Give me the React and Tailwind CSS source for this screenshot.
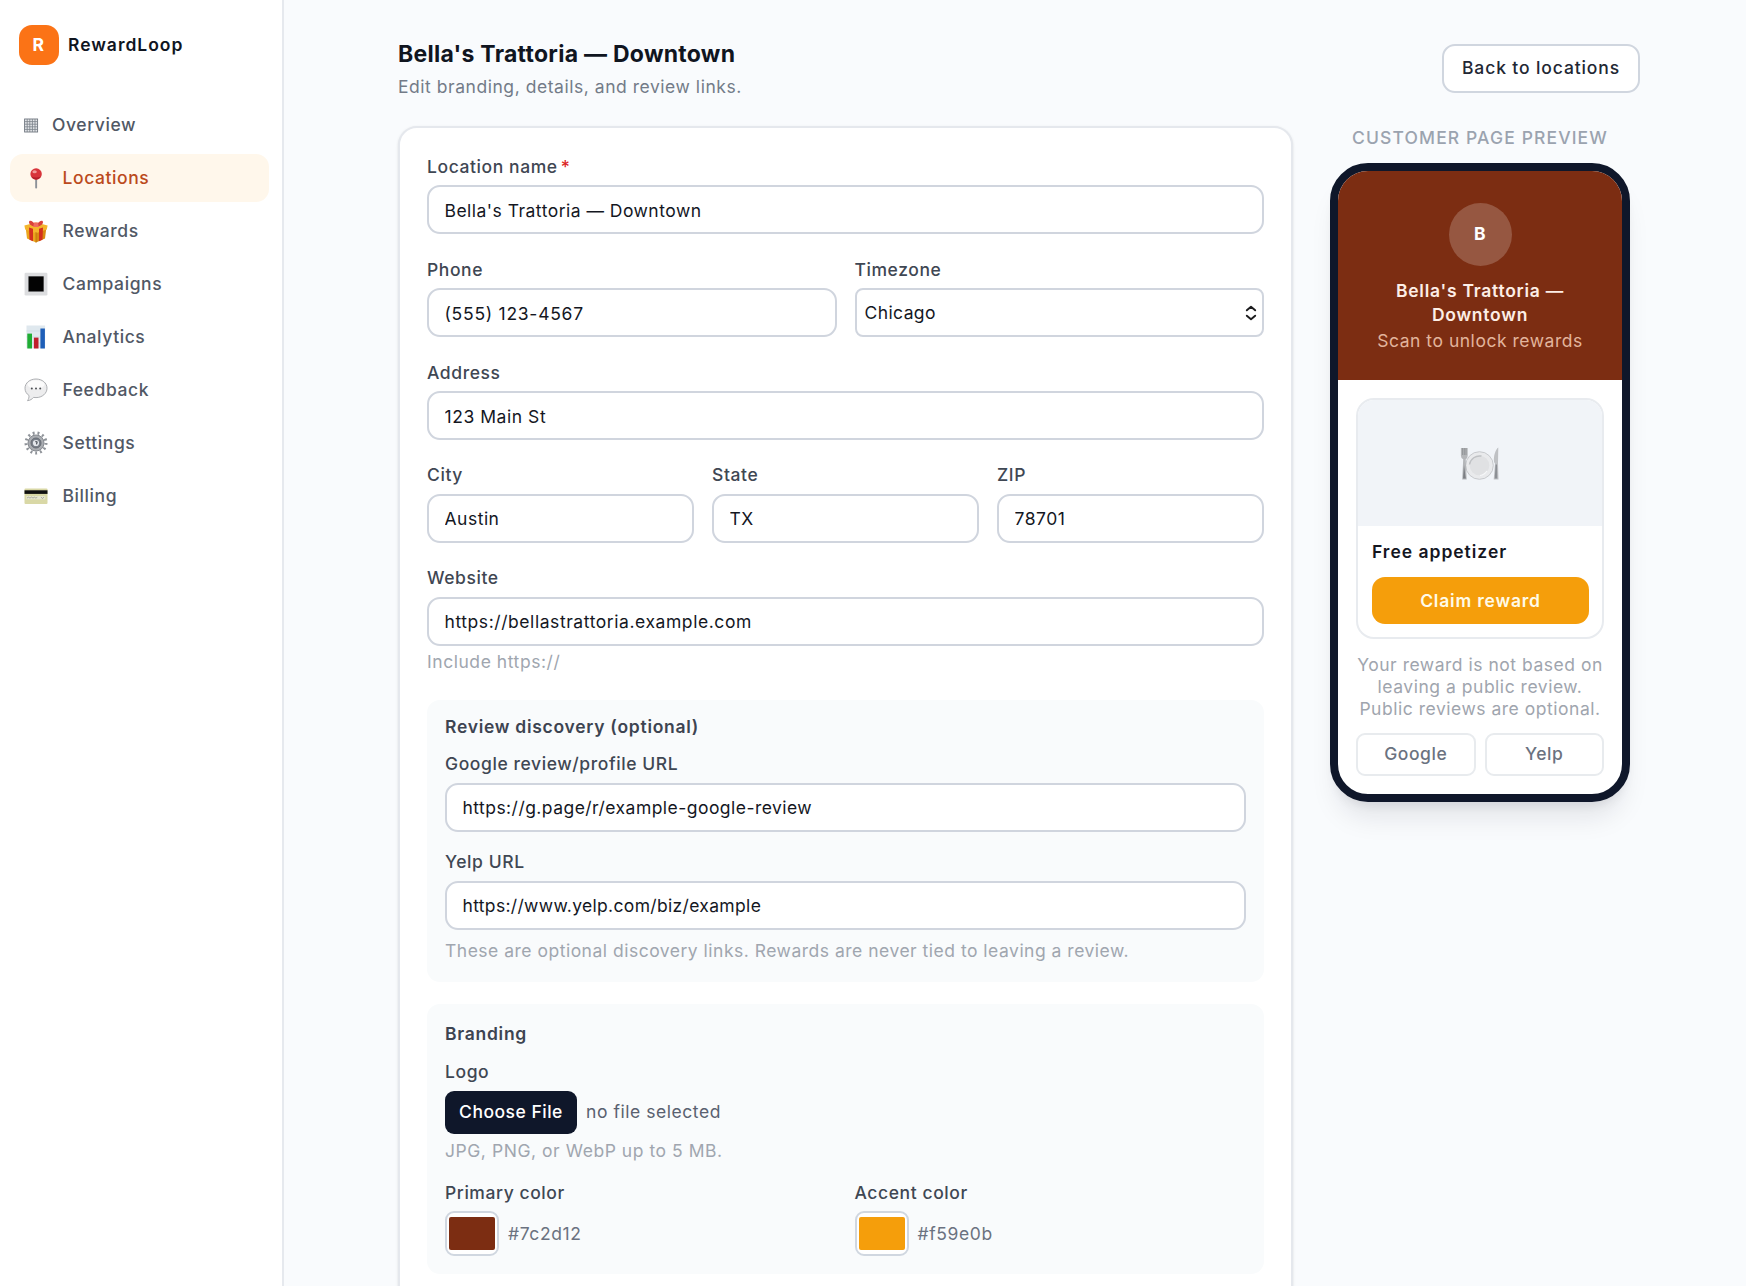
import React, { useState } from 'react'

// --- ICONS ---
const GridIcon = () => (
  <svg width="15" height="15" viewBox="0 0 15 15" className="-mr-0.5 ml-[0.5px] shrink-0">
    <rect x="0.6" y="1" width="13" height="13" fill="#e5e7ea" stroke="#6f767f" strokeWidth="0.9" />
    <path d="M3.2 1v13M5.8 1v13M8.4 1v13M11 1v13M.6 3.6h13M.6 6.2h13M.6 8.8h13M.6 11.4h13" stroke="#7d848d" strokeWidth="0.85" />
  </svg>
)

const PinIcon = () => (
  <svg width="24" height="24" viewBox="0 0 24 24" className="shrink-0">
    <rect x="11.2" y="10" width="1.9" height="12.6" rx="0.8" fill="#8d9299" />
    <circle cx="12.1" cy="8" r="5.7" fill="#d8343a" />
    <path d="M7.2 10.6a5.7 5.7 0 0 0 9.8 0q-4.8 2-9.8 0" fill="#b31f2a" />
    <ellipse cx="10.6" cy="5.7" rx="2.2" ry="1.5" fill="#f19a98" />
  </svg>
)

const GiftIcon = () => (
  <svg width="24" height="24" viewBox="0 0 24 24" className="shrink-0">
    <path d="M1.600 8.500L12 12.500v11L3 19.500z" fill="#eba51d" />
    <path d="M22.400 8.500L12 12.500v11l9-4z" fill="#d98b12" />
    <path d="M.4 6.500L12 3.500l11.600 3-.8 4L12 14.200 1.200 10.500z" fill="#f4b52c" />
    <path d="M5 8.500l4 1.300v12.500l-3.500-1.600zM19 8.500l-4 1.300v12.500l3.500-1.600z" fill="#d3301f" />
    <path d="M12 6.500C9 1.500 5 .3 5 3.200c0 2.400 3.500 4.300 7 4.600 3.500-.3 7-2.200 7-4.600 0-2.900-4-1.700-7 3.300z" fill="#d9423b" />
    <path d="M10 3.500h4l.8 4.500H9.200z" fill="#ef6a61" />
    <path d="M12 13v10.500" stroke="#b96f10" strokeWidth="0.8" />
  </svg>
)

const SquareIcon = () => (
  <svg width="24" height="24" viewBox="0 0 24 24" className="shrink-0">
    <rect x="0.6" y="0.8" width="22.8" height="22.6" rx="1.2" fill="#dcdddf" />
    <rect x="4" y="4" width="16" height="16" rx="0.8" fill="#9b9c9f" />
    <rect x="4.7" y="4.5" width="14.8" height="14.8" fill="#030303" />
  </svg>
)

const ChartIcon = () => (
  <svg width="24" height="24" viewBox="0 0 24 24" className="shrink-0">
    <rect x="2.5" y="0.5" width="18.6" height="22.8" fill="#dfe8ee" />
    <path d="M2.5 6h18.6M2.5 12h18.6M2.5 18h18.6" stroke="#cbd7df" strokeWidth="0.6" />
    <rect x="3.3" y="8.6" width="4.7" height="14.9" fill="#20ad34" />
    <rect x="9.9" y="12.6" width="4.6" height="10.9" fill="#c01f2c" />
    <rect x="16.4" y="3.5" width="4.5" height="20" fill="#1f5fb8" />
  </svg>
)

const BubbleIcon = () => (
  <svg width="24" height="24" viewBox="0 0 24 24" className="shrink-0">
    <path d="M12 1C5.800 1 1 5 1 10.200c0 3.200 1.600 5.700 4 7.300.2 2-.5 3.700-1.500 5.200 2.700-.3 4.700-1.600 6-3.300.8.100 1.600.2 2.500.2 6.200 0 11-4.200 11-9.400S18.200 1 12 1z" fill="#ededee" stroke="#a5a7aa" strokeWidth="0.9" />
    <ellipse cx="12" cy="6.5" rx="8.5" ry="4.2" fill="#fbfbfb" />
    <circle cx="7.8" cy="10.5" r="1" fill="#4c4f54" />
    <circle cx="12" cy="10.5" r="1" fill="#4c4f54" />
    <circle cx="16.2" cy="10.5" r="1" fill="#4c4f54" />
  </svg>
)

const GearIcon = () => (
  <svg width="24" height="24" viewBox="0 0 24 24" className="shrink-0">
    <circle cx="12" cy="12" r="10" fill="none" stroke="#8f9399" strokeWidth="3" strokeDasharray="1.9 2.933" />
    <circle cx="12" cy="12" r="8" fill="#aaadb2" stroke="#868a90" strokeWidth="1" />
    <circle cx="12" cy="12" r="5" fill="#7a808a" stroke="#62676f" strokeWidth="0.9" />
    <circle cx="12" cy="12" r="3.1" fill="#e4e7ec" />
    <path d="M11.4 10.4l1.7.7-.6 2.2" stroke="#4b5059" strokeWidth="1.2" fill="none" />
  </svg>
)

const CardIcon = () => (
  <svg width="24" height="24" viewBox="0 0 24 24" className="shrink-0">
    <rect x="0.5" y="4.5" width="23" height="15.5" rx="1" fill="#d9d8a6" />
    <rect x="0.5" y="6.3" width="23" height="3.6" fill="#101010" />
    <rect x="2.3" y="12" width="19" height="3.4" fill="#e6e6cf" />
    <path d="M3 14l1.500-.8 1.500.9 1.400-1 1.600.9 1.500-.8 1.400.9 1.400-.9M17 12.900l1.500 1.700 1.500-1.700" stroke="#93948a" strokeWidth="0.7" fill="none" />
  </svg>
)

const PlateIcon = () => (
  <svg width="42" height="36" viewBox="0 0 42 36" className="mt-0.5">
    <circle cx="20.5" cy="19.5" r="13.8" fill="#e9eaec" stroke="#c3c5c8" strokeWidth="0.9" />
    <circle cx="20.5" cy="19.5" r="9.8" fill="#e0e1e3" />
    <path d="M10.5 18.5a10.2 10.2 0 0 1 12-8.400" stroke="#bfc1c4" strokeWidth="1.5" fill="none" />
    <path d="M28 25a10 10 0 0 1-7 4.500" stroke="#f7f8f9" strokeWidth="1.2" fill="none" />
    <path d="M1.900 2v7.500q0 3 2.300 3.700l-1 20.300h4.500l-1-20.300Q8.700 12.500 8.700 9.500V2" fill="#b4b6b9" />
    <path d="M3.600 2v7M5.300 2v7M7 2v7" stroke="#84878b" strokeWidth="0.7" />
    <path d="M5 19l-1 13.500h2.800z" fill="#7c7f84" />
    <path d="M39.300 1.500c-2.700 1.700-5 8.500-4.300 14.500l1 1.700-1.300 15.800h4.800L39 17z" fill="#bfc1c4" />
    <path d="M36.600 18.500l-.9 14h2.600l-.3-14z" fill="#8c8f94" />
  </svg>
)

const UpDownIcon = () => (
  <svg width="12" height="16" viewBox="0 0 12 16" fill="none" stroke="#1c1c1e" strokeWidth="1.9" strokeLinecap="round" strokeLinejoin="round">
    <path d="M1.800 5.300L6 1.700l4.200 3.600M1.800 10.700L6 14.300l4.200-3.600" />
  </svg>
)

const navItems = [
  { id: 'overview', label: 'Overview', icon: GridIcon },
  { id: 'locations', label: 'Locations', icon: PinIcon },
  { id: 'rewards', label: 'Rewards', icon: GiftIcon },
  { id: 'campaigns', label: 'Campaigns', icon: SquareIcon },
  { id: 'analytics', label: 'Analytics', icon: ChartIcon },
  { id: 'feedback', label: 'Feedback', icon: BubbleIcon },
  { id: 'settings', label: 'Settings', icon: GearIcon },
  { id: 'billing', label: 'Billing', icon: CardIcon },
]

// --- FORM PIECES ---
const Label = ({ children, required }) => (
  <span className="block h-[26px] leading-[26px] font-medium tracking-[0.580px] text-[#3f4753]">
    {children}
    {required && <span className="ml-[3px] text-[#dc2626]">*</span>}
  </span>
)

const Field = ({ label, value, required, className = '', tracking = 'tracking-[0.550px]' }) => (
  <label className={`block ${className}`}>
    <Label required={required}>{label}</Label>
    <input
      defaultValue={value}
      className={`mt-[5.500px] block h-[49px] w-full rounded-[13px] border-2 border-[#d0d5de] bg-white px-[15.500px] pt-px text-[#14171f] outline-none ${tracking}`}
    />
  </label>
)

const ColorField = ({ label, value }) => (
  <div>
    <Label>{label}</Label>
    <div className="mt-[5px] flex items-center gap-[9px]">
      <div className="h-[45px] w-[54px] rounded-[9px] border-2 border-[#d0d7e0] bg-white px-0.5 py-1">
        <div className="h-[33px] rounded-[2px]" style={{ backgroundColor: value }}></div>
      </div>
      <span className="pt-0.5 tracking-[0.600px] text-[#6b7280]">{value}</span>
    </div>
  </div>
)

function Sidebar({ active, onSelect }) {
  return (
    <aside className="w-[284px] shrink-0 border-r-2 border-[#e6e9ee] bg-white">
      <div className="flex items-center gap-[9px] pl-[19px] pt-[25px]">
        <div className="flex h-10 w-10 items-center justify-center rounded-[13px] bg-[#fb7316] pr-px font-bold text-white">R</div>
        <span className="font-semibold tracking-[0.980px] text-[#10151f]">RewardLoop</span>
      </div>
      <nav className="mt-9 flex flex-col gap-[5px] pl-2.5 pr-[13.500px]">
        {navItems.map(({ id, label, icon: Icon }) => (
          <button
            key={id}
            onClick={() => onSelect(id)}
            className={`flex h-12 w-full items-center gap-[15px] rounded-[13px] pl-[13.500px] text-left font-medium tracking-[0.580px] ${
              active === id ? 'bg-[#fff7eb] text-[#bb4a1c]' : 'text-[#515865]'
            }`}
          >
            <Icon />
            <span>{label}</span>
          </button>
        ))}
      </nav>
    </aside>
  )
}

function PhonePreview() {
  return (
    <div className="flex w-[300px] flex-col">
      <p className="h-6 text-center font-medium uppercase leading-6 tracking-[1.120px] text-[#9ba3af]">Customer page preview</p>
      <div className="mt-[13px] h-[639px] overflow-hidden rounded-[38px] border-8 border-[#0f172a] bg-white shadow-[0_22px_28px_-8px_rgba(15,23,42,0.1),0_8px_12px_-6px_rgba(15,23,42,0.1)]">
        <div className="flex h-[209px] flex-col items-center bg-[#7c2d12] pt-8 text-center">
          <div className="flex h-[63px] w-[63px] items-center justify-center rounded-full bg-white/20 font-bold text-white">B</div>
          <p className="mt-[13px] w-[200px] font-semibold leading-6 tracking-[0.750px] text-[#fdeee6]">Bella's Trattoria — Downtown</p>
          <p className="mt-0.5 leading-6 tracking-[0.520px] text-[#e2b49c]">Scan to unlock rewards</p>
        </div>
        <div className="px-[18px] pt-[18px]">
          <div className="h-[241px] overflow-hidden rounded-[18px] border-2 border-[#e8ebef]">
            <div className="flex h-[126px] items-center justify-center bg-[#f1f4f8]">
              <PlateIcon />
            </div>
            <div className="pl-[14px] pr-[13px] pt-[13px]">
              <p className="leading-[26px] font-semibold tracking-[0.980px] text-[#14161f]">Free appetizer</p>
              <button className="mt-[12px] h-[47px] w-full rounded-[13px] bg-[#f59e0b] pt-px font-semibold tracking-[0.800px] text-[#fffbe8]">Claim reward</button>
            </div>
          </div>
          <p className="-mx-1 mt-[15px] text-center leading-[22px] tracking-[0.520px] text-[#9fa5ae]">
            Your reward is not based on<br />leaving a public review.<br />Public reviews are optional.
          </p>
          <div className="mt-[13px] grid grid-cols-2 gap-[9px]">
            <button className="h-[43px] rounded-[9px] border-2 border-[#e8ebee] font-medium text-[#6b7280]">Google</button>
            <button className="h-[43px] rounded-[9px] border-2 border-[#e8ebee] font-medium text-[#6b7280]">Yelp</button>
          </div>
        </div>
      </div>
    </div>
  )
}

function App() {
  const [activeTab, setActiveTab] = useState('locations')

  return (
    <div className="flex h-[1286px] overflow-hidden bg-[#f9fbfd] font-['Inter',sans-serif] text-[17.500px] tracking-[0.550px]">
      <Sidebar active={activeTab} onSelect={setActiveTab} />

      <main className="flex-1 pl-[114px] pr-[106px]">
        {/* HEADER */}
        <header className="flex h-[126px] justify-between">
          <div className="pt-[38px]">
            <h1 className="text-[23px] font-bold leading-8 tracking-[0.270px] text-[#10151f]">Bella's Trattoria — Downtown</h1>
            <p className="mt-[5px] leading-6 tracking-[0.540px] text-[#737b88]">Edit branding, details, and review links.</p>
          </div>
          <button className="mt-11 h-[49px] w-[198px] rounded-[13px] border-2 border-[#d0d6df] bg-white font-medium tracking-[0.880px] text-[#222733]">
            Back to locations
          </button>
        </header>

        <div className="flex">
          {/* FORM */}
          <section className="w-[894.500px] shrink-0 rounded-t-[19px] border-2 border-[#e5e8ed] bg-white pl-[27px] pr-[26.500px] pt-[25.800px] shadow-sm">
            <div className="space-y-[22.400px]">
              <Field label="Location name" value="Bella's Trattoria — Downtown" tracking="tracking-[0.480px]" required />
              <div className="grid grid-cols-2 gap-[18px]">
                <Field label="Phone" value="(555) 123-4567" tracking="tracking-[0.740px]" />
                <div>
                  <Label>Timezone</Label>
                  <div className="mt-[5.500px] flex h-[49px] items-center justify-between rounded-[8px] border-2 border-[#d0d5de] bg-white pl-[8px] pr-[5px] tracking-[0.400px] text-[#14171f]">
                    Chicago
                    <UpDownIcon />
                  </div>
                </div>
              </div>
              <Field label="Address" value="123 Main St" />
              <div className="grid grid-cols-3 gap-[18px]">
                <Field label="City" value="Austin" tracking="tracking-[0.500px]" />
                <Field label="State" value="TX" />
                <Field label="ZIP" value="78701" />
              </div>
              <Field label="Website" value="https://bellastrattoria.example.com" tracking="tracking-[0.570px]" />
            </div>
            <p className="mt-1 leading-6 text-[#a0a6af]">Include https://</p>

            {/* REVIEW LINKS */}
            <div className="mt-[25.700px] h-[282.500px] rounded-[13px] bg-[#f9fbfc] px-[18px] pt-[14.300px]">
              <h2 className="leading-[26px] font-semibold tracking-[0.720px] text-[#3d4451]">Review discovery (optional)</h2>
              <Field className="mt-[11.500px]" label="Google review/profile URL" value="https://g.page/r/example-google-review" tracking="tracking-[0.460px]" />
              <Field className="mt-[17.500px]" label="Yelp URL" value="https://www.yelp.com/biz/example" tracking="tracking-[0.330px]" />
              <p className="mt-[9.500px] leading-6 tracking-[0.500px] text-[#a0a6af]">These are optional discovery links. Rewards are never tied to leaving a review.</p>
            </div>

            {/* BRANDING */}
            <div className="mt-[22px] h-[269.500px] rounded-[13px] bg-[#f9fbfc] px-[18px] pt-[17px]">
              <h2 className="leading-[26px] font-semibold tracking-[0.720px] text-[#3d4451]">Branding</h2>
              <div className="mt-[11.500px]">
                <Label>Logo</Label>
              </div>
              <div className="mt-[6.500px] flex items-center gap-[9px]">
                <button className="h-[43px] w-[132px] rounded-[9px] bg-[#0f172a] font-medium tracking-[0.500px] text-white">Choose File</button>
                <span className="text-[#596170]">no file selected</span>
              </div>
              <p className="mt-[5px] leading-6 text-[#a0a6af]">JPG, PNG, or WebP up to 5 MB.</p>
              <div className="mt-[17px] grid grid-cols-2 gap-[18px]">
                <ColorField label="Primary color" value="#7c2d12" />
                <ColorField label="Accent color" value="#f59e0b" />
              </div>
            </div>
            <div className="h-20"></div>
          </section>

          {/* PREVIEW */}
          <aside className="pl-[37.500px]">
            <PhonePreview />
          </aside>
        </div>
      </main>
    </div>
  )
}

export default App
